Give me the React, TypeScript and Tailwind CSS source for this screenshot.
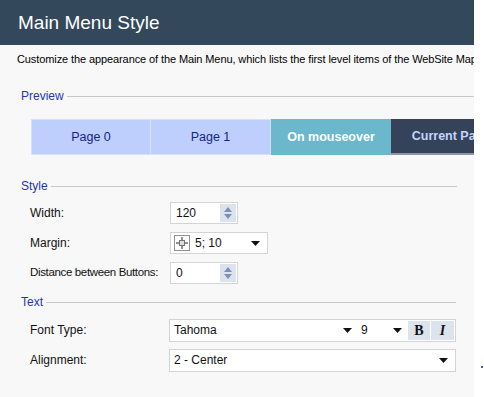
import { ReactNode } from "react";

const FONT = { fontFamily: '"Liberation Sans", Arial, sans-serif' };

function Section({ title, lineEnd, children }: { title: string; lineEnd: number; children?: ReactNode }) {
  return (
    <div>
      <div className="flex items-center h-[14px]" style={{ width: lineEnd - 21 }}>
        <span className="text-[12px] leading-none text-[#1f35b8] pr-[3px]">{title}</span>
        <div className="flex-1 h-px bg-[#c8c8c8]" />
      </div>
      {children}
    </div>
  );
}

function Row({ label, small, children }: { label: string; small?: boolean; children: ReactNode }) {
  return (
    <div className="flex items-center h-[22px]">
      <div
        className={
          small
            ? "w-[149px] shrink-0 pl-[9px] text-[11.5px] tracking-[-0.35px] text-[#111] whitespace-nowrap"
            : "w-[149px] shrink-0 pl-[9px] text-[12px] text-[#111] whitespace-nowrap"
        }
      >
        {label}
      </div>
      {children}
    </div>
  );
}

function Spinner() {
  return (
    <div className="w-[16px] h-full bg-[#dde3ec] flex flex-col items-center justify-center gap-[2px]">
      <svg width="8" height="5" viewBox="0 0 8 5"><path d="M0 5 L4 0 L8 5Z" fill="#7d8fb8" /></svg>
      <svg width="8" height="5" viewBox="0 0 8 5"><path d="M0 0 L4 5 L8 0Z" fill="#7d8fb8" /></svg>
    </div>
  );
}

function Arrow() {
  return (
    <svg width="9" height="5" viewBox="0 0 9 5"><path d="M0 0 L9 0 L4.5 5Z" fill="#111" /></svg>
  );
}

function NumBox({ value }: { value: string }) {
  return (
    <div className="w-[68px] h-[22px] border border-[#d4d4d4] bg-white flex items-stretch p-[1px]">
      <div className="flex-1 pl-[4px] text-[12px] flex items-center text-[#111]">{value}</div>
      <Spinner />
    </div>
  );
}

export default function App() {
  return (
    <div className="w-full h-[397px] bg-white relative" style={FONT}>
      <div className="w-[474px] h-[397px] bg-[#f8f8f8] overflow-hidden">
        <div className="h-[45px] bg-[#34485c] flex items-center pl-[18px]">
          <span className="text-[19px] text-white leading-none">Main Menu Style</span>
        </div>
        <div className="pl-[17px] pt-[6px] text-[11px] tracking-[-0.1px] text-black whitespace-nowrap h-[44px]">
          Customize the appearance of the Main Menu, which lists the first level items of the WebSite Map
        </div>
        <div className="pl-[21px]">
          <Section title="Preview" lineEnd={474}>
            <div className="flex ml-[10px] mt-[16px] h-[36px] text-[12.5px] whitespace-nowrap">
              <div className="w-[120px] shrink-0 bg-[#bfcffd] border border-[#d6e0fe] text-[#12238a] flex items-center justify-center">Page 0</div>
              <div className="w-[120px] shrink-0 bg-[#bfcffd] border border-[#d6e0fe] border-l-0 text-[#12238a] flex items-center justify-center">Page 1</div>
              <div className="w-[120px] shrink-0 bg-[#6bb7cc] text-white font-bold flex items-center justify-center">On mouseover</div>
              <div className="w-[120px] shrink-0 bg-[#34425a] border-b-[2px] border-[#8d95a6] text-[#c5d3ff] font-bold flex items-center justify-center">Current Page</div>
            </div>
          </Section>
          <div className="h-[24px]" />
          <Section title="Style" lineEnd={457}>
            <div className="mt-[9px] flex flex-col gap-[8px]">
              <Row label="Width:">
                <NumBox value="120" />
              </Row>
              <Row label="Margin:">
                <div className="w-[98px] h-[22px] border border-[#d4d4d4] bg-white flex items-center pl-[3px] pr-[7px]">
                  <svg width="16" height="16" viewBox="0 0 16 16">
                    <rect x="0.5" y="0.5" width="15" height="15" fill="none" stroke="#222" strokeDasharray="1 1" />
                    <rect x="5.5" y="5.5" width="5" height="5" fill="#ddd" stroke="#777" />
                    <path d="M8 2v3M8 11v3M2 8h3M11 8h3" stroke="#222" />
                  </svg>
                  <span className="ml-[5px] text-[12px] flex-1 text-[#111]">5; 10</span>
                  <Arrow />
                </div>
              </Row>
              <Row label="Distance between Buttons:" small>
                <NumBox value="0" />
              </Row>
            </div>
          </Section>
          <div className="h-[11px]" />
          <Section title="Text" lineEnd={456}>
            <div className="mt-[10px] flex flex-col gap-[8px]">
              <Row label="Font Type:">
                <div className="w-[287px] -ml-px h-[23px] border border-[#d4d4d4] bg-white flex items-stretch p-[1px]">
                  <div className="w-[186px] flex items-center pl-[3px] pr-[5px]">
                    <span className="flex-1 text-[12px] text-[#111]">Tahoma</span>
                    <Arrow />
                  </div>
                  <div className="w-[51px] flex items-center pl-[4px] pr-[6px]">
                    <span className="flex-1 text-[12px] text-[#111]">9</span>
                    <Arrow />
                  </div>
                  <div className="w-[22px] bg-[#dde3ec] flex items-center justify-center font-bold text-[14px] text-[#111]" style={{ fontFamily: '"Liberation Serif", serif' }}>B</div>
                  <div className="w-[23px] ml-px bg-[#dde3ec] flex items-center justify-center italic font-bold text-[14px] text-[#111]" style={{ fontFamily: '"Liberation Serif", serif' }}>I</div>
                </div>
              </Row>
              <Row label="Alignment:">
                <div className="w-[287px] -ml-px h-[23px] border border-[#d4d4d4] bg-white flex items-center pl-[4px] pr-[7px]">
                  <span className="flex-1 text-[12px] text-[#111]">2 - Center</span>
                  <Arrow />
                </div>
              </Row>
            </div>
          </Section>
        </div>
      </div>
      <div className="absolute left-[481px] top-[366px] w-[2px] h-[2px] bg-[#3a5bd0]" />
    </div>
  );
}
